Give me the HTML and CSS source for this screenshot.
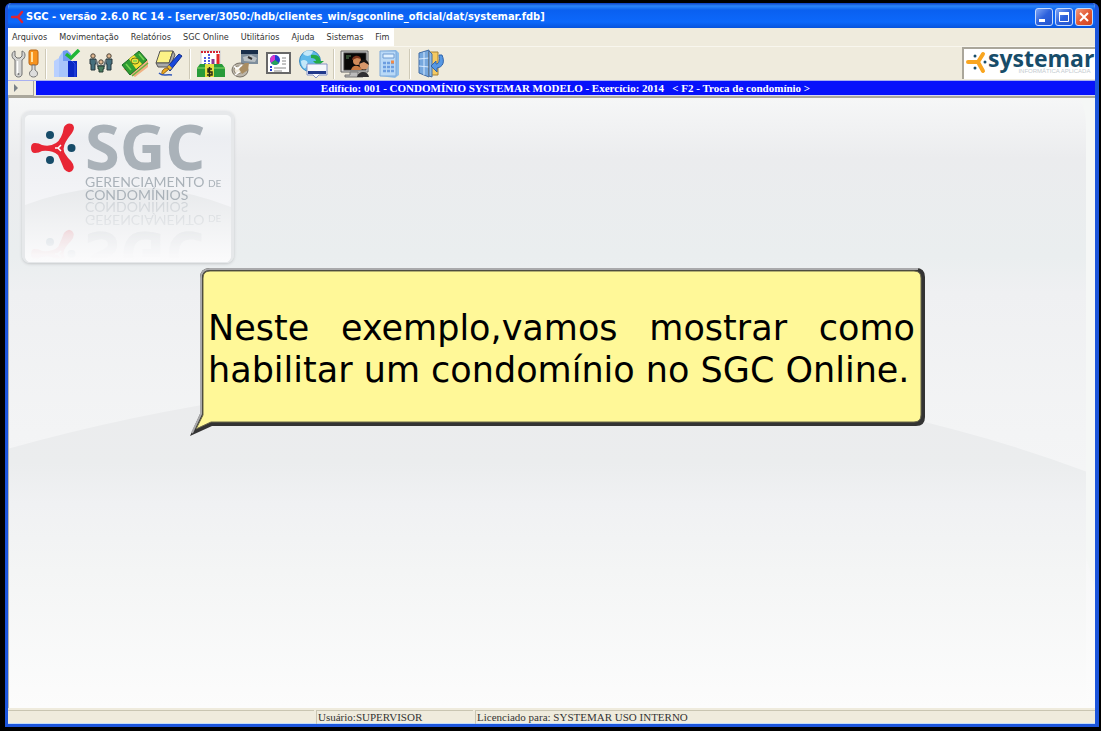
FILE: index.html
```html
<!DOCTYPE html>
<html lang="pt-BR">
<head>
    <meta charset="UTF-8">
    <meta name="viewport" content="width=device-width, initial-scale=1.0">
    <title>SGC - Gerenciamento de Condomínios</title>
    <link rel="stylesheet" href="styles.css">
</head>
<body>
    <div class="window">
        <header class="title-bar">
            <svg class="title-icon" width="13" height="14" viewBox="0 0 13 14">
                <path d="M1 7H7L11 2M7 7L11 12" fill="none" stroke="#e02432" stroke-width="2.4" stroke-linecap="round"/>
            </svg>
            <h1>SGC - versão 2.6.0 RC 14 - [server/3050:/hdb/clientes_win/sgconline_oficial/dat/systemar.fdb]</h1>
            <div class="window-buttons">
                <button type="button" aria-label="Minimizar">
                    <svg width="16" height="16" viewBox="0 0 16 16"><path d="M3 11.5H9" stroke="#fff" stroke-width="3"/></svg>
                </button>
                <button type="button" aria-label="Maximizar">
                    <svg width="16" height="16" viewBox="0 0 16 16"><path d="M3.5 4V12.5H12.5V4" fill="none" stroke="#fff"/><path d="M3 4.5H13" stroke="#fff" stroke-width="3"/></svg>
                </button>
                <button type="button" class="close" aria-label="Fechar">
                    <svg width="16" height="16" viewBox="0 0 16 16"><path d="M4 4L12 12M12 4L4 12" stroke="#fff" stroke-width="2"/></svg>
                </button>
            </div>
        </header>

        <nav class="menu-bar">
            <div class="menu">
                <button type="button">Arquivos</button>
                <button type="button">Movimentação</button>
                <button type="button">Relatórios</button>
                <button type="button">SGC Online</button>
                <button type="button">Utilitários</button>
                <button type="button">Ajuda</button>
                <button type="button">Sistemas</button>
                <button type="button">Fim</button>
            </div>
        </nav>

        <div class="toolbar">
            <div class="tools">
                <button type="button" aria-label="Configurações">
                    <svg width="28" height="30" viewBox="0 0 28 30">
                        <path d="M4 2C0 3 0 9 4 11V25C4 29 11 29 11 25V11C15 9 15 3 11 2V7L9 9H6L4 7Z" fill="#d4d4d2" stroke="#707070"/>
                        <path d="M6.5 12V25" stroke="#fff" stroke-width="1.5"/>
                        <circle cx="7.5" cy="25" r="1" fill="#777"/>
                        <rect x="18" y="1" width="9" height="15" rx="2" fill="#f7931e" stroke="#b56517"/>
                        <path d="M21 3V13" stroke="#ffe0a0" stroke-width="2"/>
                        <path d="M21 16H24V21C28 23 27 28 22.5 28S17 23 21 21Z" fill="#ddd" stroke="#777"/>
                    </svg>
                </button>
                <span class="separator"></span>
                <button type="button" aria-label="Edifícios">
                    <svg width="28" height="30" viewBox="0 0 28 30">
                        <path d="M1 12L6 9V28H1Z" fill="#b9d0ff"/>
                        <path d="M6 8L10 2H15V28H6Z" fill="#a8c5fb"/>
                        <path d="M10 2L14 1L18 5V12H10Z" fill="#6f9af2"/>
                        <path d="M15 12H24V28H15Z" fill="#0a27c4"/>
                        <path d="M19 12L22 15V28" fill="none" stroke="#3152e8"/>
                        <path d="M13 5L18 9L26 1" fill="none" stroke="#1fb635" stroke-width="3.5"/>
                    </svg>
                </button>
                <button type="button" aria-label="Condôminos">
                    <svg width="24" height="30" viewBox="0 0 24 30">
                        <g fill="#e1b993" stroke="#4b4338"><circle cx="4" cy="7" r="2.2"/><circle cx="20" cy="7" r="2.2"/><circle cx="12" cy="13" r="2.2"/></g>
                        <path d="M1 10H7V15H6V21H2V15H1ZM17 10H23V15H22V21H18V15H17Z" fill="#456f7d" stroke="#29383e"/>
                        <path d="M7 11L9 17H15L17 11" fill="none" stroke="#68757c" stroke-width="2"/>
                        <path d="M9 17H15V20H14V23H10V20H9Z" fill="#477a5e" stroke="#293c35"/>
                    </svg>
                </button>
                <button type="button" aria-label="Financeiro">
                    <svg width="28" height="30" viewBox="0 0 28 30">
                        <path d="M2 20L14 28L27 18L27 11Z" fill="#f0b183"/>
                        <path d="M1 16L18 2L26 11L9 26Z" fill="#2e9d32" stroke="#196b24"/>
                        <path d="M8 10L13 6L21 15L15 20Z" fill="#f8df35"/>
                        <ellipse cx="14" cy="12" rx="4" ry="3" fill="#ece43b" stroke="#647514"/>
                        <path d="M12 12H16M5 15L10 21M18 5L23 11" stroke="#75d252" stroke-width="1.5"/>
                        <path d="M11 27L27 14" fill="none" stroke="#63b33d" stroke-width="1.5"/>
                    </svg>
                </button>
                <button type="button" aria-label="Lançamentos">
                    <svg width="28" height="30" viewBox="0 0 28 30">
                        <path d="M5 2H18L14 14H1Z" fill="#fcf286" stroke="#555"/>
                        <path d="M1 14H14L18 2L20 6L15 18H3Z" fill="#aaa" stroke="#555"/>
                        <path d="M27 7L24 5L12 18L15 22Z" fill="#1948dd" stroke="#122d86"/>
                        <path d="M13 17L16 20" stroke="#e6b62c" stroke-width="3"/>
                        <path d="M14 20L7 26C6 22 9 19 12 19Z" fill="#f0a71c" stroke="#8d621c"/>
                        <path d="M4 24C8 28 10 25 17 26" fill="none" stroke="#3158bb" stroke-width="1.5"/>
                    </svg>
                </button>
                <span class="separator"></span>
                <button type="button" aria-label="Balancete">
                    <svg width="28" height="30" viewBox="0 0 28 30">
                        <rect x="4" y="2" width="19" height="19" fill="#fff" stroke="#c8ccd6"/>
                        <path d="M4 3H23" stroke="#d32331" stroke-width="2" stroke-dasharray="2 1"/>
                        <path d="M8 8V16M12 5V16" stroke="#4a5ce0" stroke-width="2" stroke-dasharray="2 1"/>
                        <path d="M16 10V16" stroke="#8b368f" stroke-width="3"/><path d="M21 5V16" stroke="#e42727" stroke-width="3"/>
                        <path d="M0 19L3 15H25L28 19V28H0Z" fill="#289b3a"/>
                        <path d="M0 19H28" stroke="#8fdc67"/>
                        <path d="M8 15H17V28H8Z" fill="#e2df42"/>
                        <path d="M15 20H11V23H15V26H10M12.5 18V28" fill="none" stroke="#282b16" stroke-width="1.5"/>
                    </svg>
                </button>
                <button type="button" aria-label="Movimento bancário">
                    <svg width="28" height="30" viewBox="0 0 28 30">
                        <rect x="10" y="1" width="17" height="14" fill="#7e8e9c"/>
                        <path d="M10 1H27V5H10Z" fill="#182e4a"/>
                        <path d="M12 8L20 6L26 9L24 13L13 12Z" fill="#bac1c5"/>
                        <path d="M17 8L21 10" stroke="#333" stroke-width="2"/>
                        <ellipse cx="9" cy="21" rx="8" ry="7" fill="#bcb6aa" stroke="#777167"/>
                        <circle cx="7" cy="21" r="4" fill="#eee7d7" stroke="#938b7c"/>
                        <path d="M8 20L14 14H18L17 21L11 25Z" fill="#a98d63"/>
                        <path d="M3 17L6 20L11 16M4 26L8 23" fill="none" stroke="#fff" stroke-width="1.5"/>
                    </svg>
                </button>
                <button type="button" aria-label="Gráficos">
                    <svg width="26" height="30" viewBox="0 0 26 30">
                        <rect x="1" y="4" width="23" height="20" fill="#fff" stroke="#686868" stroke-width="2"/>
                        <circle cx="9" cy="11" r="5" fill="#243dd1"/><path d="M9 11V6A5 5 0 0 0 5 14Z" fill="#d637cf"/><path d="M9 11L5 14A5 5 0 0 0 13 14Z" fill="#27a45a"/>
                        <path d="M16 9H20M16 12H20M16 15H20M8 19H20M8 22H16" stroke="#888"/>
                        <path d="M4 18H6M4 21H6" stroke="#243dd1" stroke-width="2"/>
                    </svg>
                </button>
                <button type="button" aria-label="SGC Online">
                    <svg width="30" height="30" viewBox="0 0 30 30">
                        <circle cx="12" cy="12" r="10.5" fill="#5fb9ea" stroke="#3c8ac1"/>
                        <path d="M5 5C10 9 14 6 15 2C9 0 6 3 5 5ZM3 12C8 9 12 14 8 18C7 22 3 17 3 12Z" fill="#c3e8f9"/>
                        <path d="M13 6C20 5 23 9 22 12H26L20 17L15 12H18C18 10 16 9 13 9Z" fill="#22ab49"/>
                        <path d="M9 15H29V26H21L18 29L15 26H9Z" fill="#f6f7fb" stroke="#8493c5"/>
                        <path d="M10 23.5H28" stroke="#20398b" stroke-width="3"/>
                    </svg>
                </button>
                <span class="separator"></span>
                <button type="button" aria-label="Atendimento">
                    <svg width="30" height="30" viewBox="0 0 30 30">
                        <path d="M1 2H28V23H1Z" fill="#ddd" stroke="#606060"/>
                        <rect x="4" y="4" width="22" height="17" fill="#080808" stroke="#333"/>
                        <path d="M10 23H18V26H23V28H5V26H10Z" fill="#bbb" stroke="#777"/>
                        <circle cx="17" cy="12" r="4" fill="#cf8a59"/><path d="M12 11C12 6 20 5 21 10L17 9Z" fill="#7b351e"/>
                        <path d="M11 21C12 16 19 15 22 21Z" fill="#c67943"/>
                        <circle cx="24" cy="16" r="4.5" fill="#d7976b"/><path d="M19 15C20 9 28 9 29 16L24 13Z" fill="#171314"/>
                        <path d="M17 28C18 22 28 21 29 28Z" fill="#302f32"/>
                        <path d="M6 7H11M6 9H9" stroke="#578858"/>
                    </svg>
                </button>
                <button type="button" aria-label="Calculadora">
                    <svg width="22" height="30" viewBox="0 0 22 30">
                        <path d="M3 2L18 1L21 4V26L17 29L2 27Z" fill="#91bfea"/>
                        <path d="M2 2H18V27H2Z" fill="#b9d9f7" stroke="#7ca9da"/>
                        <path d="M5 5H16V9H5Z" fill="#e0f1ff" stroke="#6e9bd1"/>
                        <path d="M5 14H16M5 18H16M5 22H16" stroke="#6c9ee0" stroke-width="2.5" stroke-dasharray="3 1"/>
                        <path d="M13 13H16" stroke="#f28b47" stroke-width="3"/>
                    </svg>
                </button>
                <span class="separator"></span>
                <button type="button" aria-label="Sair">
                    <svg width="28" height="30" viewBox="0 0 28 30">
                        <path d="M2 4L12 1V28L2 24Z" fill="#76a8de" stroke="#426da5"/>
                        <path d="M7 3V26M2 10L12 9M2 17L12 18" stroke="#d6eaff"/>
                        <path d="M12 3H21V26H12Z" fill="#f5ca62" stroke="#a78232"/>
                        <path d="M12 2L15 5V28L12 27Z" fill="#8dbbe7" stroke="#456da3"/>
                        <path d="M22 6H25C28 13 26 18 20 19V23L14 17L19 12V15C22 15 23 11 22 6Z" fill="#5698e4" stroke="#3164aa"/>
                    </svg>
                </button>
            </div>
            <div class="brand">
                <svg width="22" height="24" viewBox="0 0 22 24">
                    <path d="M2 11H12L17 3M12 11L17 20" fill="none" stroke="#f9a51f" stroke-width="4" stroke-linecap="round" stroke-linejoin="round"/>
                    <g fill="#174c69"><circle cx="9" cy="5" r="1.5"/><circle cx="9" cy="17" r="1.5"/><circle cx="19" cy="11" r="1.5"/></g>
                </svg>
                <div class="brand-text">
                    <strong>systemar</strong>
                    <small>INFORMÁTICA APLICADA</small>
                </div>
            </div>
        </div>

        <div class="context-bar">
            <button type="button" aria-label="Expandir"><svg width="5" height="8" viewBox="0 0 5 8"><path d="M0 0L4 4L0 8Z" fill="#788087"/></svg></button>
            <p>Edifício: 001 - CONDOMÍNIO SYSTEMAR MODELO - Exercício: 2014 &nbsp; &lt; F2 - Troca de condomínio &gt;</p>
        </div>

        <main class="desktop">
            <svg class="backdrop" viewBox="0 0 1086 611" preserveAspectRatio="none" aria-hidden="true">
                <defs>
                    <linearGradient id="sky" x2="0" y2="1">
                        <stop offset="0" stop-color="#f6f7f7"/>
                        <stop offset="0.1" stop-color="#ebecee"/>
                        <stop offset="0.26" stop-color="#eaeeef"/>
                        <stop offset="0.32" stop-color="#eff0f2"/>
                        <stop offset="0.55" stop-color="#f3f4f5"/>
                        <stop offset="1" stop-color="#fcfcfc"/>
                    </linearGradient>
                    <linearGradient id="hill" gradientUnits="userSpaceOnUse" x1="0" y1="270" x2="0" y2="611">
                        <stop offset="0" stop-color="#ebebed"/>
                        <stop offset="0.28" stop-color="#ebedee"/>
                        <stop offset="0.4" stop-color="#f0f1f3"/>
                        <stop offset="0.6" stop-color="#f4f5f5"/>
                        <stop offset="1" stop-color="#fcfcfc"/>
                    </linearGradient>
                </defs>
                <path d="M0 0H1086V611H0Z" fill="url(#sky)"/>
                <path d="M0 351C350 255 730 245 1077 374V611H0Z" fill="url(#hill)"/>
                <path d="M1071 0Q1077 10 1077 30V460L1086 490V0Z" fill="#f5f7f6"/>
            </svg>

            <section class="logo-card">
                <svg class="card-hill" viewBox="0 0 202 70" preserveAspectRatio="none" aria-hidden="true">
                    <defs>
                        <linearGradient id="card-fade" x2="0" y2="1">
                            <stop offset="0" stop-color="#e7e9eb"/>
                            <stop offset="1" stop-color="#fbfbfc"/>
                        </linearGradient>
                    </defs>
                    <path d="M0 16Q101 -20 202 18V70H0Z" fill="url(#card-fade)"/>
                </svg>
                <div class="logo">
                    <svg width="46" height="50" viewBox="0 0 46 50">
                        <path d="M5 20Q1 20 1 25T5 30Q9 30 12 28Q22 27 28 32Q30 36 34 46Q38 51 42 48Q46 44 41 38Q32 29 34 24Q34 20 42 10Q46 4 42 1Q37 -1 34 4Q32 16 26 20Q20 24 12 22Q9 20 5 20Z" fill="#e82635"/>
                        <path d="M25 25H28L31 22M28 25L31 28" fill="none" stroke="#fff" stroke-width="1.5"/>
                        <g fill="#174c69"><circle cx="20" cy="12" r="4"/><circle cx="20" cy="37" r="4"/><circle cx="41.5" cy="25" r="4"/></g>
                    </svg>
                    <div class="logo-text">
                        <h2>SGC</h2>
                        <p>GERENCIAMENTO <small>DE</small><br>CONDOMÍNIOS</p>
                    </div>
                </div>
            </section>

            <aside class="callout">
                <svg class="callout-shape" viewBox="0 0 735 169" preserveAspectRatio="none" aria-hidden="true">
                    <path d="M20 0H726Q735 0 735 9V149Q735 158 726 158H22L0 168L10 146V10Q10 0 20 0Z" fill="#333"/>
                    <path d="M728 1H20Q11 1 11 10V146L2 165" fill="none" stroke="#aaaaac" stroke-width="2"/>
                    <path d="M20 3H724Q731 3 731 10V147Q731 154 724 154H21L6 161L13 147V10Q13 3 20 3Z" fill="#fff898" stroke="#69664b"/>
                </svg>
                <p>Neste exemplo,vamos mostrar como habilitar um condomínio no SGC Online.</p>
            </aside>
        </main>

        <footer class="status-bar">
            <span></span>
            <span>Usuário:SUPERVISOR</span>
            <span>Licenciado para: SYSTEMAR USO INTERNO</span>
        </footer>
    </div>
</body>
</html>
```

FILE: styles.css
```css
* {
    box-sizing: border-box;
}

body {
    margin: 0;
    padding: 3px 2px 4px 5px;
    background: #000;
    font-family: "Liberation Sans", Arial, sans-serif;
}

button {
    margin: 0;
    padding: 0;
    border: none;
    background: none;
    font: inherit;
    color: inherit;
}

h1, h2, p {
    margin: 0;
}

svg {
    display: block;
    flex-shrink: 0;
}

.window {
    display: flex;
    flex-direction: column;
    min-height: calc(100vh - 7px);
    border: solid #1c55dc;
    border-width: 0 4px 3px 3px;
    border-radius: 6px 6px 0 0;
    background: #efebdd;
    overflow: hidden;
}

/* Title bar */
.title-bar {
    display: flex;
    align-items: center;
    height: 25px;
    padding: 2px 2px 0 3px;
    background: linear-gradient(#0b3fc4, #2b86fa 3px, #0a60f0 7px, #0c68fb 19px, #0753dc);
    color: #fff;
}

.title-icon {
    margin-right: 2px;
}

.title-bar h1 {
    flex: 1;
    font: bold 11px/16px "DejaVu Sans Condensed", sans-serif;
    white-space: nowrap;
}

.window-buttons {
    display: flex;
    gap: 2px;
}

.window-buttons button {
    width: 18px;
    height: 18px;
    border: 1px solid #c7dafb;
    border-radius: 3px;
    background: linear-gradient(135deg, #7fa5f5, #2d61dc 50%, #2456cf);
}

.window-buttons .close {
    background: linear-gradient(135deg, #f49a7c, #e25a35 50%, #cf4420);
}

/* Menu */
.menu-bar {
    display: flex;
    height: 18px;
}

.menu {
    display: flex;
    gap: 12px;
    padding: 0 4px;
    background: #fff;
    font: 9px/17px "DejaVu Sans Condensed", sans-serif;
    color: #333;
}

/* Toolbar */
.toolbar {
    display: flex;
    justify-content: space-between;
    height: 34px;
    border-top: 1px solid #f8f6ee;
}

.tools {
    display: flex;
    align-items: center;
}

.tools button {
    display: flex;
    justify-content: center;
    width: 34px;
}

.separator {
    width: 8px;
    height: 30px;
    background: linear-gradient(90deg, transparent 3px, #cfcab8 3px, #cfcab8 4px, #fff 4px, #fff 5px, transparent 5px);
}

.brand {
    display: flex;
    width: 133px;
    height: 32px;
    padding: 2px 0 0 2px;
    border: solid #aaa69a;
    border-width: 2px 0 0 2px;
    background: #fff;
}

.brand-text {
    display: flex;
    flex-direction: column;
    color: #174c69;
}

.brand-text strong {
    font: bold 23px/15px "Open Sans", sans-serif;
}

.brand-text small {
    align-self: flex-end;
    margin-right: 4px;
    font-size: 6px;
    line-height: 10px;
    color: #c4cbd0;
}

/* Current building */
.context-bar {
    display: flex;
    height: 18px;
    border-top: 1px solid #a9b0f0;
    border-bottom: 2px solid #aaa79c;
}

.context-bar button {
    display: flex;
    align-items: center;
    width: 26px;
    margin-right: 2px;
    padding-left: 6px;
    border: solid #aaa79c;
    border-width: 0 1px 1px 0;
}

.context-bar p {
    flex: 1;
    border-bottom: 1px solid #d9d9ee;
    background: #0712fb;
    color: #fff;
    font: bold 11px/14px "Liberation Serif", serif;
    text-align: center;
    white-space: nowrap;
}

/* Desktop */
.desktop {
    position: relative;
    flex: 1;
    padding: 13px;
    border-left: 1px solid #b5b5b2;
}

.backdrop {
    position: absolute;
    inset: 0;
    width: 100%;
    height: 100%;
}

.logo-card {
    position: relative;
    width: 212px;
    height: 152px;
    padding: 8px 0 0 5px;
    border: solid #e6e8ea;
    border-width: 4px 3px 1px 3px;
    border-radius: 8px;
    background: linear-gradient(#f8f9fa, #eceef2 15%, #f1f2f5 45%, #fcfcfd);
    box-shadow: 0 1px 3px #c4c7c9;
    overflow: hidden;
}

.card-hill {
    position: absolute;
    left: 0;
    bottom: 0;
    width: 100%;
    height: 74px;
}

.logo {
    position: relative;
    display: flex;
    height: 78px;
    -webkit-box-reflect: below 0 linear-gradient(transparent 25%, rgba(0, 0, 0, 0.08) 55%, rgba(0, 0, 0, 0.4));
}

.logo-text {
    margin-left: 9px;
    color: #aab2b9;
}

.logo h2 {
    font: bold 63px/46px "Open Sans", sans-serif;
}

.logo p {
    margin-top: 6px;
    font: 14px/13px Lato, sans-serif;
    white-space: nowrap;
}

.logo small {
    font-size: 10px;
    line-height: 8px;
}

.callout {
    position: absolute;
    top: 170px;
    left: 181px;
    width: 735px;
    height: 169px;
    padding: 39px 10px 0 18px;
    font: 35px/42px "DejaVu Sans", sans-serif;
    color: #000;
    text-align: justify;
}

.callout-shape {
    position: absolute;
    inset: 0;
    width: 100%;
    height: 100%;
}

.callout p {
    position: relative;
}

/* Status bar */
.status-bar {
    display: grid;
    grid-template-columns: 306px 157px 1fr;
    gap: 2px;
    height: 16px;
    padding-top: 2px;
    border-bottom: 1px solid #c3dcf8;
    font: 11px/13px "Liberation Serif", serif;
    color: #333;
}

.status-bar span {
    border-top: 1px solid #c9c5b2;
}

.status-bar span + span {
    padding-left: 1px;
    border-left: 1px solid #c9c5b2;
}
```
